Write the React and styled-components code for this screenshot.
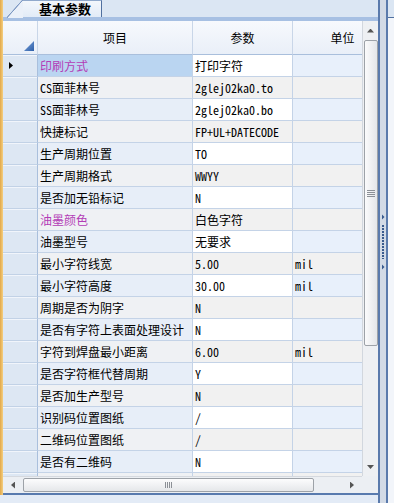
import React from 'react';
import styled, { createGlobalStyle } from 'styled-components';

const GlobalStyle = createGlobalStyle`
  html, body { margin: 0; padding: 0; }
  body {
    width: 394px;
    height: 503px;
    overflow: hidden;
    background: #e3ebf6;
    font-family: "Noto Sans Mono CJK SC", "Noto Sans CJK SC", monospace;
  }
`;

const rows = [
  { name: '印刷方式', value: '打印字符', unit: '', pink: true, current: true },
  { name: 'CS面菲林号', value: '2glej02ka0.to', unit: '' },
  { name: 'SS面菲林号', value: '2glej02ka0.bo', unit: '' },
  { name: '快捷标记', value: 'FP+UL+DATECODE', unit: '' },
  { name: '生产周期位置', value: 'TO', unit: '' },
  { name: '生产周期格式', value: 'WWYY', unit: '' },
  { name: '是否加无铅标记', value: 'N', unit: '' },
  { name: '油墨颜色', value: '白色字符', unit: '', pink: true },
  { name: '油墨型号', value: '无要求', unit: '' },
  { name: '最小字符线宽', value: '5.00', unit: 'mil' },
  { name: '最小字符高度', value: '30.00', unit: 'mil' },
  { name: '周期是否为阴字', value: 'N', unit: '' },
  { name: '是否有字符上表面处理设计', value: 'N', unit: '' },
  { name: '字符到焊盘最小距离', value: '6.00', unit: 'mil' },
  { name: '是否字符框代替周期', value: 'Y', unit: '' },
  { name: '是否加生产型号', value: 'N', unit: '' },
  { name: '识别码位置图纸', value: '/', unit: '' },
  { name: '二维码位置图纸', value: '/', unit: '' },
  { name: '是否有二维码', value: 'N', unit: '' },
  { name: '', value: '', unit: '' },
];

// layout shells
const Frame = styled.div`
  display: flex;
  width: 394px;
  height: 503px;
`;

const GoldEdge = styled.div`
  width: 3px;
  height: 495px;
  background: linear-gradient(to right, #e2a84a, #f4cf80);
`;

const Main = styled.div`
  width: 375px;
  display: flex;
  flex-direction: column;
`;

const TabStrip = styled.div`
  height: 17px;
  background: #dbe6f3;
  display: flex;
`;

const Tab = styled.div`
  position: relative;
  margin-left: 20px;
  width: 79px;
  height: 17px;
  box-sizing: border-box;
  border-top: 1px solid #90a9cc;
  border-right: 1px solid #50709f;
  background: linear-gradient(#f3f7fc, #e2ebf7);
  font: bold 13px "Noto Sans CJK SC", sans-serif;
  color: #000;
  line-height: 15px;
  padding-left: 16px;
  &::before {
    content: '';
    position: absolute;
    left: -16px;
    top: -1px;
    width: 16px;
    height: 18px;
    background: linear-gradient(to bottom right, transparent calc(50% - 1px), #7d98c2 calc(50% - 0.5px), #7d98c2 50%, #eaf0f9 calc(50% + 0.5px));
  }
`;

const Band = styled.div`
  height: 4px;
  background: #a7c0e3;
`;

const Body = styled.div`
  display: flex;
  height: 455px;
`;

const GridBox = styled.div`
  width: 359px;
  overflow: hidden;
  background: #fff;
`;

const Row = styled.div`
  display: flex;
  height: ${p => p.$h}px;
`;

const Cell = styled.div`
  flex: none;
  width: ${p => p.$w}px;
  box-sizing: border-box;
  border-right: 1px solid #c4d3e7;
  border-bottom: 1px solid #c4d3e7;
  background: ${p => p.$bg};
  color: ${p => p.$color || '#000'};
  font-size: 12px;
  line-height: 21px;
  padding-left: 2px;
  white-space: nowrap;
  overflow: hidden;
`;

const HeadCell = styled.div`
  flex: none;
  width: ${p => p.$w}px;
  box-sizing: border-box;
  border-right: 1px solid #c9d6e8;
  border-bottom: 1px solid #a9bfdc;
  background: linear-gradient(#f7f9fd, #e9eff8);
  display: flex;
  align-items: center;
  justify-content: center;
  font: 12px "Noto Sans CJK SC", sans-serif;
  color: #000;
  position: relative;
`;

const CornerMark = styled.span`
  position: absolute;
  right: 3px;
  bottom: 3px;
  width: 10px;
  height: 10px;
  background: linear-gradient(135deg, #7fa6dc, #2c5ea8);
  clip-path: polygon(100% 0, 100% 100%, 0 100%);
`;

const RowHead = styled.div`
  flex: none;
  width: 35px;
  box-sizing: border-box;
  border-right: 1px solid #a9bfdc;
  border-bottom: 1px solid #c2d2e6;
  background: #dde7f3;
  box-shadow: inset 0 1px #f1f5fb;
  display: flex;
  align-items: center;
  padding-left: 6px;
`;

const Pointer = styled.span`
  width: 4px;
  height: 7px;
  background: #000;
  clip-path: polygon(0 0, 100% 50%, 0 100%);
`;

// scrollbars
const VScroll = styled.div`
  width: 16px;
  box-sizing: border-box;
  border-left: 1px solid #d2d7de;
  background: #eef0f3;
  display: flex;
  flex-direction: column;
  align-items: center;
`;

const ScrollBtn = styled.div`
  flex: none;
  width: ${p => p.$w || 15}px;
  height: ${p => p.$h || 15}px;
  display: flex;
  align-items: center;
  justify-content: center;
`;

const Arrow = styled.span`
  display: block;
  background: #555;
  width: ${p => (p.$dir === 'up' || p.$dir === 'down' ? 7 : 4)}px;
  height: ${p => (p.$dir === 'up' || p.$dir === 'down' ? 4 : 7)}px;
  clip-path: ${p =>
    p.$dir === 'up' ? 'polygon(50% 0, 100% 100%, 0 100%)'
    : p.$dir === 'down' ? 'polygon(0 0, 100% 0, 50% 100%)'
    : p.$dir === 'left' ? 'polygon(100% 0, 100% 100%, 0 50%)'
    : 'polygon(0 0, 100% 50%, 0 100%)'};
`;

const VThumb = styled.div`
  flex: none;
  width: 14px;
  height: 306px;
  box-sizing: border-box;
  border: 1px solid #9da2a8;
  border-radius: 2px;
  background: linear-gradient(to right, #fbfbfc, #e4e6e9);
  display: flex;
  align-items: center;
  justify-content: center;
`;

const Grip = styled.span`
  display: block;
  width: ${p => (p.$vertical ? 7 : 8)}px;
  height: ${p => (p.$vertical ? 6 : 7)}px;
  background: ${p => p.$vertical
    ? 'repeating-linear-gradient(to right, #8c9096 0 1px, transparent 1px 2px)'
    : 'repeating-linear-gradient(to bottom, #8c9096 0 1px, transparent 1px 2px)'};
`;

const VTrack = styled.div`
  flex: 1;
`;

const HRow = styled.div`
  display: flex;
  height: 17px;
`;

const HScroll = styled.div`
  width: 359px;
  display: flex;
  align-items: center;
  background: #eceff3;
  border-top: 1px solid #d5d9df;
  box-sizing: border-box;
`;

const HThumb = styled.div`
  width: 291px;
  height: 14px;
  box-sizing: border-box;
  border: 1px solid #9da2a8;
  border-radius: 2px;
  background: linear-gradient(#fcfcfd, #e5e7ea);
  display: flex;
  align-items: center;
  justify-content: center;
`;

const HTrack = styled.div`
  flex: 1;
`;

const Corner = styled.div`
  width: 16px;
  background: #eceff3;
`;

const BottomLine = styled.div`
  height: 2px;
  background: #587aae;
`;

const Splitter = styled.div`
  width: 10px;
  box-sizing: border-box;
  border-left: 2px solid #5a7aac;
  border-right: 2px solid #5a7aac;
  background: #d2dae6;
  display: flex;
  flex-direction: column;
  align-items: center;
  padding-top: 214px;
`;

const SplitArrow = styled.span`
  width: 3px;
  height: 6px;
  background: #36598e;
  clip-path: polygon(0 0, 100% 50%, 0 100%);
`;

const Dots = styled.span`
  width: 2px;
  height: 34px;
  margin: 5px 0;
  background: repeating-linear-gradient(to bottom, #3a5b8e 0 2px, transparent 2px 3px);
`;

const SidePanel = styled.div`
  flex: 1;
  display: flex;
  flex-direction: column;
`;

const SideTop = styled.div`
  height: 17px;
  background: #dbe6f3;
  border-bottom: 1px solid #50709f;
`;

const SideBody = styled.div`
  flex: 1;
  background: #f2f5fa;
`;

const nameBg = (i, cur) => (cur ? '#bad5f1' : i % 2 === 0 ? '#e7eef8' : '#eff1f4');
const valueBg = i => (i % 2 === 0 ? '#ffffff' : '#f1f1f1');
const unitBg = i => (i % 2 === 0 ? '#e8f0fb' : '#f1f1f1');

export default function App() {
  return (
    <>
      <GlobalStyle />
      <Frame>
        <GoldEdge />
        <Main>
          <TabStrip>
            <Tab>基本参数</Tab>
          </TabStrip>
          <Band />
          <Body>
            <GridBox>
              <Row $h={34}>
                <HeadCell $w={35}><CornerMark /></HeadCell>
                <HeadCell $w={155}>项目</HeadCell>
                <HeadCell $w={100}>参数</HeadCell>
                <HeadCell $w={100}>单位</HeadCell>
              </Row>
              {rows.map((r, i) => (
                <Row key={i} $h={22}>
                  <RowHead>{r.current && <Pointer />}</RowHead>
                  <Cell $w={155} $bg={nameBg(i, r.current)} $color={r.pink ? '#b33cb6' : '#000'}>{r.name}</Cell>
                  <Cell $w={100} $bg={valueBg(i)}>{r.value}</Cell>
                  <Cell $w={100} $bg={unitBg(i)}>{r.unit}</Cell>
                </Row>
              ))}
            </GridBox>
            <VScroll>
              <ScrollBtn $h={19}><Arrow $dir="up" /></ScrollBtn>
              <VThumb><Grip $vertical={false} /></VThumb>
              <VTrack />
              <ScrollBtn $h={18}><Arrow $dir="down" /></ScrollBtn>
            </VScroll>
          </Body>
          <HRow>
            <HScroll>
              <ScrollBtn $w={20}><Arrow $dir="left" /></ScrollBtn>
              <HThumb><Grip $vertical /></HThumb>
              <HTrack />
              <ScrollBtn $w={20}><Arrow $dir="right" /></ScrollBtn>
            </HScroll>
            <Corner />
          </HRow>
          <BottomLine />
        </Main>
        <Splitter>
          <SplitArrow />
          <Dots />
          <SplitArrow />
        </Splitter>
        <SidePanel>
          <SideTop />
          <SideBody />
        </SidePanel>
      </Frame>
    </>
  );
}
